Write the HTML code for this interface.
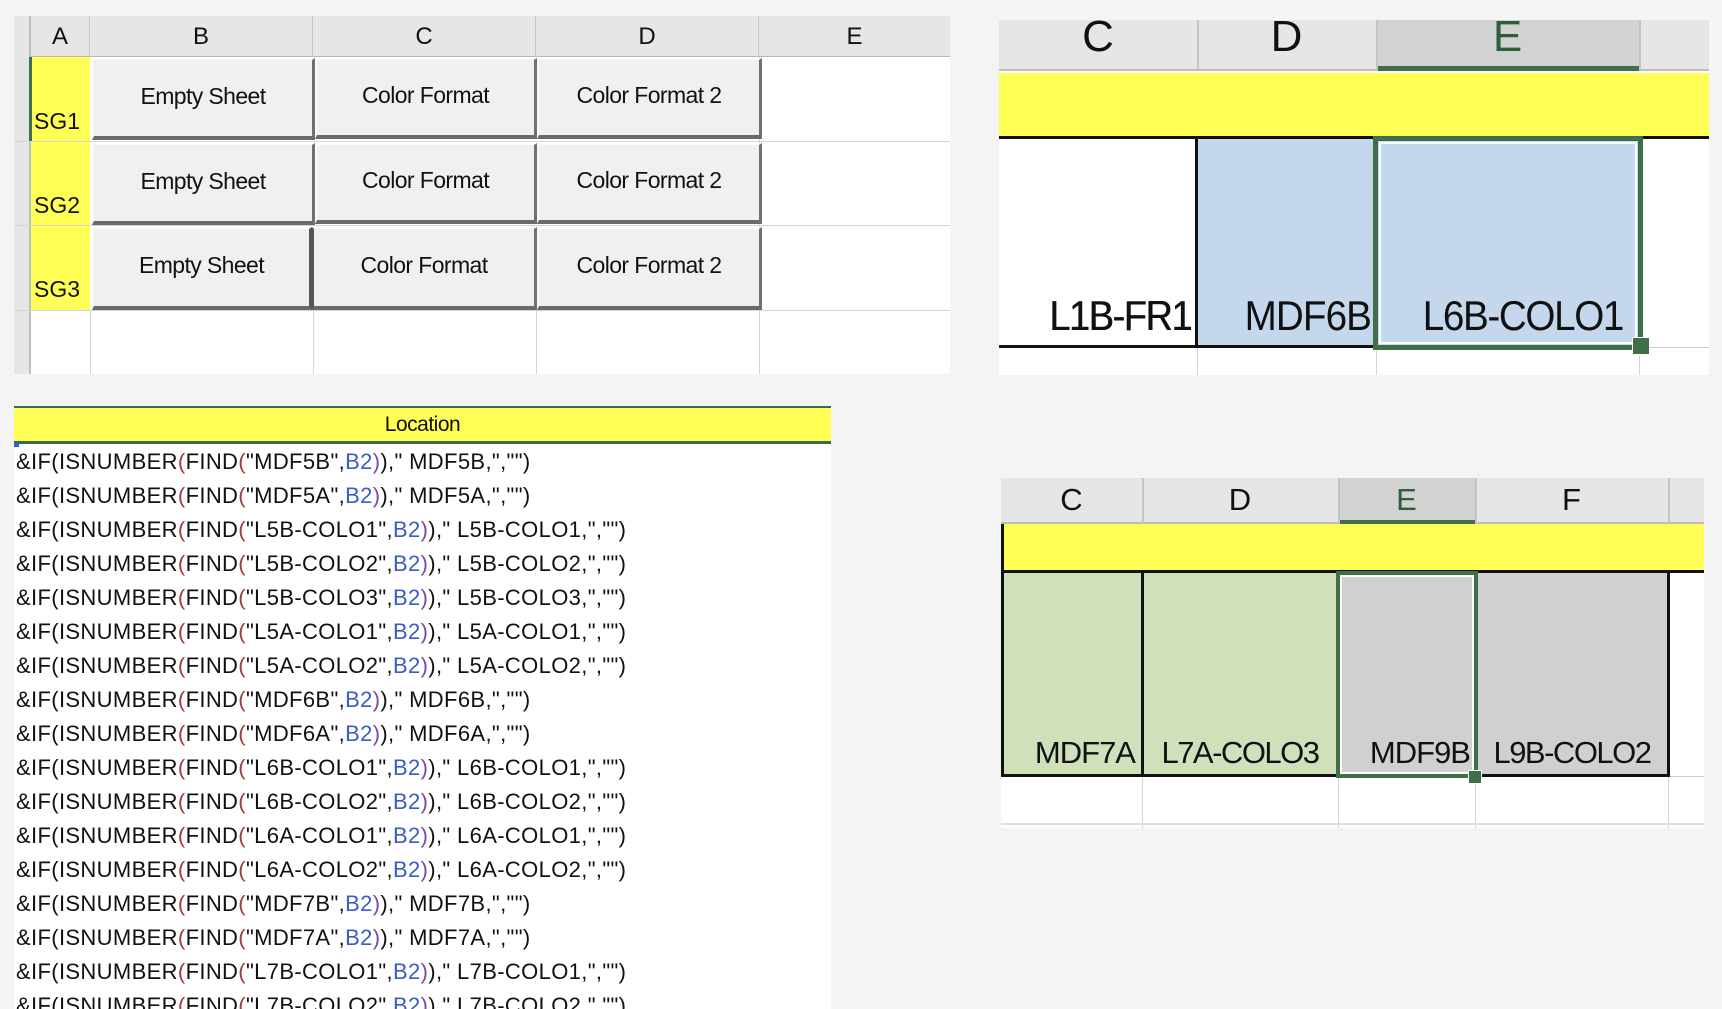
<!DOCTYPE html>
<html><head><meta charset="utf-8">
<style>
*{margin:0;padding:0;box-sizing:border-box}
body{width:1722px;height:1009px;background:#f4f4f4;position:relative;overflow:hidden;font-family:"Liberation Sans",sans-serif;color:#111}
.a{position:absolute}
.hd{background:#e6e6e6;border-right:1px solid #c6c6c6;border-bottom:1px solid #b8b8b8;text-align:center;font-size:24px;}
.vl{position:absolute;width:1px;background:#d4d4d4}
.hl{position:absolute;height:1px;background:#d4d4d4}
.btn{position:absolute;background:#f0f0f0;border-top:2px solid #fafafa;border-left:2px solid #fafafa;border-right:3px solid #707070;border-bottom:4px solid #6a6a6a;display:flex;align-items:center;justify-content:center;font-size:23px;letter-spacing:-0.6px;padding-bottom:4px}
.f{position:absolute;left:16px;font-size:22px;letter-spacing:0.35px;white-space:pre;line-height:34px}
.b{color:#3a5cc8}.r{color:#a23c3c}.p{color:#7a4aa8}
</style></head><body>

<!-- Panel 1 -->
<div class="a" style="left:14px;top:16px;width:936px;height:358px;background:#fff"></div>
<div class="a" style="left:14px;top:16px;width:17px;height:358px;background:#e6e6e6;border-right:2px solid #bdbdbd"></div>
<div class="a hd" style="left:31px;top:16px;width:59px;height:41px;line-height:41px">A</div>
<div class="a hd" style="left:90px;top:16px;width:223px;height:41px;line-height:41px">B</div>
<div class="a hd" style="left:313px;top:16px;width:223px;height:41px;line-height:41px">C</div>
<div class="a hd" style="left:536px;top:16px;width:223px;height:41px;line-height:41px">D</div>
<div class="a hd" style="left:759px;top:16px;width:191px;height:41px;line-height:41px;border-right:none">E</div>
<div class="a" style="left:31px;top:57px;width:59px;height:253px;background:#ffff55"></div>
<div class="a" style="left:29px;top:57px;width:3px;height:84px;background:#3f6e48"></div>
<div class="hl" style="left:14px;top:141px;width:936px"></div>
<div class="hl" style="left:14px;top:225px;width:936px"></div>
<div class="hl" style="left:14px;top:310px;width:936px"></div>
<div class="vl" style="left:90px;top:310px;height:64px"></div>
<div class="vl" style="left:313px;top:310px;height:64px"></div>
<div class="vl" style="left:536px;top:310px;height:64px"></div>
<div class="vl" style="left:759px;top:57px;height:317px"></div>
<div class="a" style="left:34px;top:108px;font-size:23px">SG1</div>
<div class="a" style="left:34px;top:192px;font-size:23px">SG2</div>
<div class="a" style="left:34px;top:276px;font-size:23px">SG3</div>

<div class="btn" style="left:92px;top:58px;width:223px;height:82px">Empty Sheet</div>
<div class="btn" style="left:315px;top:58px;width:222px;height:81px">Color Format</div>
<div class="btn" style="left:537px;top:58px;width:225px;height:81px">Color Format 2</div>
<div class="btn" style="left:92px;top:143px;width:223px;height:82px">Empty Sheet</div>
<div class="btn" style="left:315px;top:143px;width:222px;height:81px">Color Format</div>
<div class="btn" style="left:537px;top:143px;width:225px;height:81px">Color Format 2</div>
<div class="btn" style="left:92px;top:227px;width:220px;height:83px;border-right:3px solid #555">Empty Sheet</div>
<div class="btn" style="left:312px;top:227px;width:225px;height:83px;border-left:2px solid #555">Color Format</div>
<div class="btn" style="left:537px;top:227px;width:225px;height:83px">Color Format 2</div>

<!-- Panel 2 -->
<div class="a" style="left:999px;top:20px;width:710px;height:355px;background:#fff;overflow:hidden">
  <div class="a" style="left:0;top:0;width:710px;height:51px;background:#e6e6e6;border-bottom:2px solid #bdbdbd"></div>
  <div class="a" style="left:377px;top:0;width:263px;height:51px;background:#d2d2d2;border-bottom:5px solid #3f6e48"></div>
  <div class="a" style="left:198px;top:0;width:2px;height:51px;background:#c4c4c4"></div>
  <div class="a" style="left:377px;top:0;width:2px;height:51px;background:#c4c4c4"></div>
  <div class="a" style="left:640px;top:0;width:2px;height:51px;background:#c4c4c4"></div>
  <div class="a" style="left:0;top:-8px;width:198px;text-align:center;font-size:44px">C</div>
  <div class="a" style="left:198px;top:-8px;width:179px;text-align:center;font-size:44px">D</div>
  <div class="a" style="left:377px;top:-8px;width:263px;text-align:center;font-size:44px;color:#2f5d3a">E</div>
  <div class="a" style="left:0;top:53px;width:710px;height:66px;background:#ffff55;border-bottom:3px solid #111"></div>
  <div class="a" style="left:198px;top:119px;width:442px;height:208px;background:#c5d7ec"></div>
  <div class="a" style="left:196px;top:119px;width:3px;height:208px;background:#111"></div>
  <div class="a" style="left:0;top:325px;width:640px;height:3px;background:#111"></div>
  <div class="a" style="left:640px;top:327px;width:70px;height:1px;background:#ccc"></div>
  <div class="vl" style="left:198px;top:328px;height:30px"></div>
  <div class="vl" style="left:377px;top:328px;height:30px"></div>
  <div class="vl" style="left:640px;top:328px;height:30px"></div>
  <div class="a" style="left:0;top:272px;width:192px;text-align:right;font-size:42px;letter-spacing:-1.5px;transform:scaleX(.9);transform-origin:right;text-shadow:0.6px 0 0 #111">L1B-FR1</div>
  <div class="a" style="left:200px;top:272px;width:172px;text-align:right;font-size:42px;letter-spacing:-1px;transform:scaleX(.92);transform-origin:right">MDF6B</div>
  <div class="a" style="left:384px;top:272px;width:240px;text-align:right;font-size:42px;letter-spacing:-1.5px;transform:scaleX(.92);transform-origin:right">L6B-COLO1</div>
  <div class="a" style="left:374px;top:116px;width:270px;height:214px;border:5px solid #3f6e48"></div>
  <div class="a" style="left:380px;top:122px;width:258px;height:202px;border:2px solid #fff"></div>
  <div class="a" style="left:633px;top:317px;width:18px;height:18px;background:#3f6e48;border:1px solid #fff"></div>
</div>

<!-- Panel 3 -->
<div class="a" style="left:1001px;top:478px;width:703px;height:350px;background:#fff;overflow:hidden">
  <div class="a" style="left:0;top:0;width:703px;height:46px;background:#e6e6e6;border-bottom:2px solid #bdbdbd"></div>
  <div class="a" style="left:337px;top:0;width:137px;height:46px;background:#d2d2d2;border-bottom:4px solid #3f6e48"></div>
  <div class="a" style="left:141px;top:0;width:2px;height:46px;background:#c4c4c4"></div>
  <div class="a" style="left:337px;top:0;width:2px;height:46px;background:#c4c4c4"></div>
  <div class="a" style="left:474px;top:0;width:2px;height:46px;background:#c4c4c4"></div>
  <div class="a" style="left:667px;top:0;width:2px;height:46px;background:#c4c4c4"></div>
  <div class="a" style="left:0;top:4px;width:141px;text-align:center;font-size:31px">C</div>
  <div class="a" style="left:141px;top:4px;width:196px;text-align:center;font-size:31px">D</div>
  <div class="a" style="left:337px;top:4px;width:137px;text-align:center;font-size:31px;color:#2f5d3a">E</div>
  <div class="a" style="left:474px;top:4px;width:193px;text-align:center;font-size:31px">F</div>
  <div class="a" style="left:0;top:46px;width:703px;height:49px;background:#ffff55;border-bottom:3px solid #111"></div>
  <div class="a" style="left:0;top:46px;width:3px;height:252px;background:#111"></div>
  <div class="a" style="left:3px;top:95px;width:334px;height:201px;background:#cfe0bb"></div>
  <div class="a" style="left:337px;top:95px;width:330px;height:201px;background:#d0d0d0"></div>
  <div class="a" style="left:140px;top:95px;width:3px;height:201px;background:#111"></div>
  <div class="a" style="left:666px;top:95px;width:3px;height:203px;background:#111"></div>
  <div class="a" style="left:0;top:296px;width:669px;height:3px;background:#111"></div>
  <div class="a" style="left:669px;top:298px;width:40px;height:1px;background:#ccc"></div>
  <div class="vl" style="left:141px;top:299px;height:51px"></div>
  <div class="vl" style="left:337px;top:299px;height:51px"></div>
  <div class="vl" style="left:474px;top:299px;height:51px"></div>
  <div class="vl" style="left:667px;top:299px;height:51px"></div>
  <div class="a" style="left:0;top:345px;width:703px;height:2px;background:#ddd"></div>
  <div class="a" style="left:0;top:257px;width:134px;text-align:right;font-size:31px;letter-spacing:-1px">MDF7A</div>
  <div class="a" style="left:145px;top:257px;width:188px;text-align:center;font-size:31px;letter-spacing:-1.5px">L7A-COLO3</div>
  <div class="a" style="left:337px;top:257px;width:132px;text-align:right;font-size:31px;letter-spacing:-1px">MDF9B</div>
  <div class="a" style="left:476px;top:257px;width:190px;text-align:center;font-size:31px;letter-spacing:-1.5px">L9B-COLO2</div>
  <div class="a" style="left:335px;top:93px;width:142px;height:207px;border:4px solid #3f6e48"></div>
  <div class="a" style="left:339px;top:97px;width:134px;height:199px;border:2px solid #fff"></div>
  <div class="a" style="left:467px;top:292px;width:14px;height:14px;background:#3f6e48;border:1px solid #fff"></div>
</div>

<!-- Panel 4 -->
<div class="a" style="left:14px;top:406px;width:817px;height:603px;background:#fff;overflow:hidden">
  <div class="a" style="left:0;top:0;width:817px;height:38px;background:#ffff55;border-top:2px solid #3d6b4a;border-bottom:3px solid #3d6b4a;text-align:center;font-size:21px;line-height:33px;letter-spacing:-0.5px">Location</div>
  <div class="a" style="left:0;top:36px;width:5px;height:5px;background:#3a5cc8"></div>
</div>
<div class="a" style="left:0;top:445px;width:831px;height:564px;overflow:hidden">
<div class="f" style="top:0">&amp;IF(ISNUMBER<span class="r">(</span>FIND<span class="r">(</span>"MDF5B",<span class="b">B2</span><span class="p">)</span>)," MDF5B,","")</div>
<div class="f" style="top:34px">&amp;IF(ISNUMBER<span class="r">(</span>FIND<span class="r">(</span>"MDF5A",<span class="b">B2</span><span class="p">)</span>)," MDF5A,","")</div>
<div class="f" style="top:68px">&amp;IF(ISNUMBER<span class="r">(</span>FIND<span class="r">(</span>"L5B-COLO1",<span class="b">B2</span><span class="p">)</span>)," L5B-COLO1,","")</div>
<div class="f" style="top:102px">&amp;IF(ISNUMBER<span class="r">(</span>FIND<span class="r">(</span>"L5B-COLO2",<span class="b">B2</span><span class="p">)</span>)," L5B-COLO2,","")</div>
<div class="f" style="top:136px">&amp;IF(ISNUMBER<span class="r">(</span>FIND<span class="r">(</span>"L5B-COLO3",<span class="b">B2</span><span class="p">)</span>)," L5B-COLO3,","")</div>
<div class="f" style="top:170px">&amp;IF(ISNUMBER<span class="r">(</span>FIND<span class="r">(</span>"L5A-COLO1",<span class="b">B2</span><span class="p">)</span>)," L5A-COLO1,","")</div>
<div class="f" style="top:204px">&amp;IF(ISNUMBER<span class="r">(</span>FIND<span class="r">(</span>"L5A-COLO2",<span class="b">B2</span><span class="p">)</span>)," L5A-COLO2,","")</div>
<div class="f" style="top:238px">&amp;IF(ISNUMBER<span class="r">(</span>FIND<span class="r">(</span>"MDF6B",<span class="b">B2</span><span class="p">)</span>)," MDF6B,","")</div>
<div class="f" style="top:272px">&amp;IF(ISNUMBER<span class="r">(</span>FIND<span class="r">(</span>"MDF6A",<span class="b">B2</span><span class="p">)</span>)," MDF6A,","")</div>
<div class="f" style="top:306px">&amp;IF(ISNUMBER<span class="r">(</span>FIND<span class="r">(</span>"L6B-COLO1",<span class="b">B2</span><span class="p">)</span>)," L6B-COLO1,","")</div>
<div class="f" style="top:340px">&amp;IF(ISNUMBER<span class="r">(</span>FIND<span class="r">(</span>"L6B-COLO2",<span class="b">B2</span><span class="p">)</span>)," L6B-COLO2,","")</div>
<div class="f" style="top:374px">&amp;IF(ISNUMBER<span class="r">(</span>FIND<span class="r">(</span>"L6A-COLO1",<span class="b">B2</span><span class="p">)</span>)," L6A-COLO1,","")</div>
<div class="f" style="top:408px">&amp;IF(ISNUMBER<span class="r">(</span>FIND<span class="r">(</span>"L6A-COLO2",<span class="b">B2</span><span class="p">)</span>)," L6A-COLO2,","")</div>
<div class="f" style="top:442px">&amp;IF(ISNUMBER<span class="r">(</span>FIND<span class="r">(</span>"MDF7B",<span class="b">B2</span><span class="p">)</span>)," MDF7B,","")</div>
<div class="f" style="top:476px">&amp;IF(ISNUMBER<span class="r">(</span>FIND<span class="r">(</span>"MDF7A",<span class="b">B2</span><span class="p">)</span>)," MDF7A,","")</div>
<div class="f" style="top:510px">&amp;IF(ISNUMBER<span class="r">(</span>FIND<span class="r">(</span>"L7B-COLO1",<span class="b">B2</span><span class="p">)</span>)," L7B-COLO1,","")</div>
<div class="f" style="top:544px">&amp;IF(ISNUMBER<span class="r">(</span>FIND<span class="r">(</span>"L7B-COLO2",<span class="b">B2</span><span class="p">)</span>)," L7B-COLO2,","")</div>
</div>
</body></html>
